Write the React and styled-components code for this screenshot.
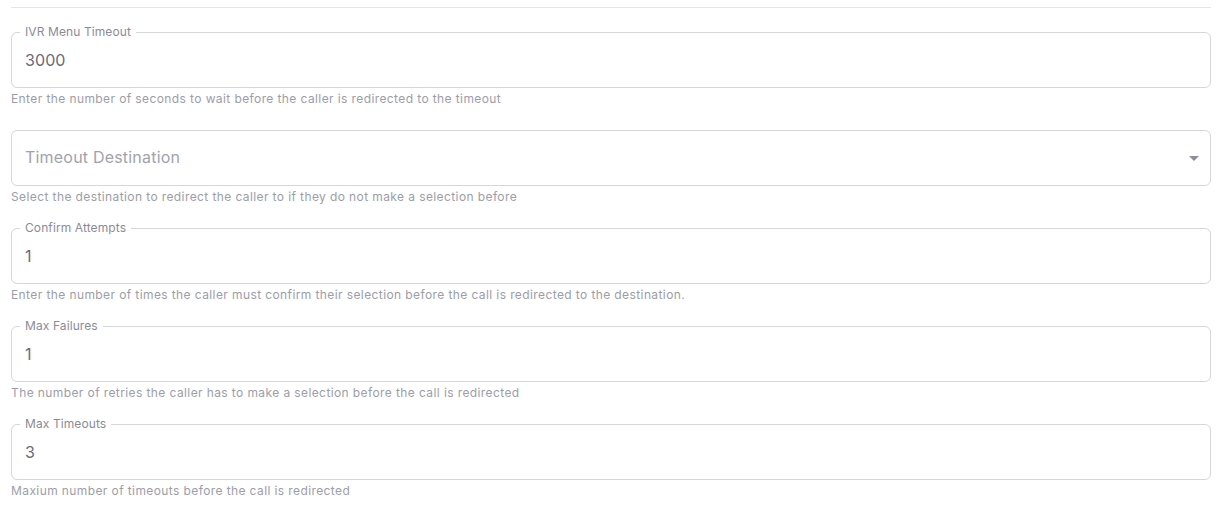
import { createGlobalStyle, styled } from "styled-components";

const GlobalStyle = createGlobalStyle`
  body {
    margin: 0;
    background: #ffffff;
    font-family: Inter, "Noto Sans", sans-serif;
  }
`;

const Page = styled.div`
  padding: 7px 11px 0 11px;
  width: 1200px;
`;

const Divider = styled.hr`
  border: 0;
  border-top: 1px solid #e6e6ea;
  margin: 0 0 24px 0;
`;

const FieldGroup = styled.div`
  margin-bottom: 24px;
`;

const Box = styled.div`
  position: relative;
  height: 54px;
  border: 1px solid #d6d6dc;
  border-radius: 6px;
  display: flex;
  align-items: center;
  padding: 0 13px;
`;

const FloatLabel = styled.span`
  position: absolute;
  top: -8px;
  left: 8px;
  padding: 0 5px;
  background: #ffffff;
  font-size: 12px;
  line-height: 14px;
  letter-spacing: 0.1px;
  color: #8b8b98;
`;

const Value = styled.span`
  font-size: 16px;
  letter-spacing: ${(p) => (p.$placeholder ? "0.2px" : "0.1px")};
  color: ${(p) => (p.$placeholder ? "#a2a2ae" : "#6a6a7a")};
  flex: 1;
  margin-top: ${(p) => (p.$placeholder ? "-2px" : "0")};
`;

const Caret = styled.span`
  width: 0;
  height: 0;
  border-left: 5px solid transparent;
  border-right: 5px solid transparent;
  border-top: 5px solid #8e8e9a;
  margin-right: -2px;
`;

const Helper = styled.div`
  margin-top: 4px;
  font-size: 12px;
  line-height: 14px;
  color: #9d9daa;
  letter-spacing: 0.4px;
`;

const fields = [
  {
    label: "IVR Menu Timeout",
    value: "3000",
    help: "Enter the number of seconds to wait before the caller is redirected to the timeout",
  },
  {
    placeholder: "Timeout Destination",
    select: true,
    help: "Select the destination to redirect the caller to if they do not make a selection before",
  },
  {
    label: "Confirm Attempts",
    value: "1",
    help: "Enter the number of times the caller must confirm their selection before the call is redirected to the destination.",
  },
  {
    label: "Max Failures",
    value: "1",
    help: "The number of retries the caller has to make a selection before the call is redirected",
  },
  {
    label: "Max Timeouts",
    value: "3",
    help: "Maxium number of timeouts before the call is redirected",
  },
];

const App = () => {
  return (
    <Page>
      <GlobalStyle />
      <Divider />
      {fields.map((f) => (
        <FieldGroup key={f.help}>
          <Box>
            {f.label && <FloatLabel>{f.label}</FloatLabel>}
            {f.placeholder ? (
              <Value $placeholder>{f.placeholder}</Value>
            ) : (
              <Value>{f.value}</Value>
            )}
            {f.select && <Caret />}
          </Box>
          <Helper>{f.help}</Helper>
        </FieldGroup>
      ))}
    </Page>
  );
};

export default App;
